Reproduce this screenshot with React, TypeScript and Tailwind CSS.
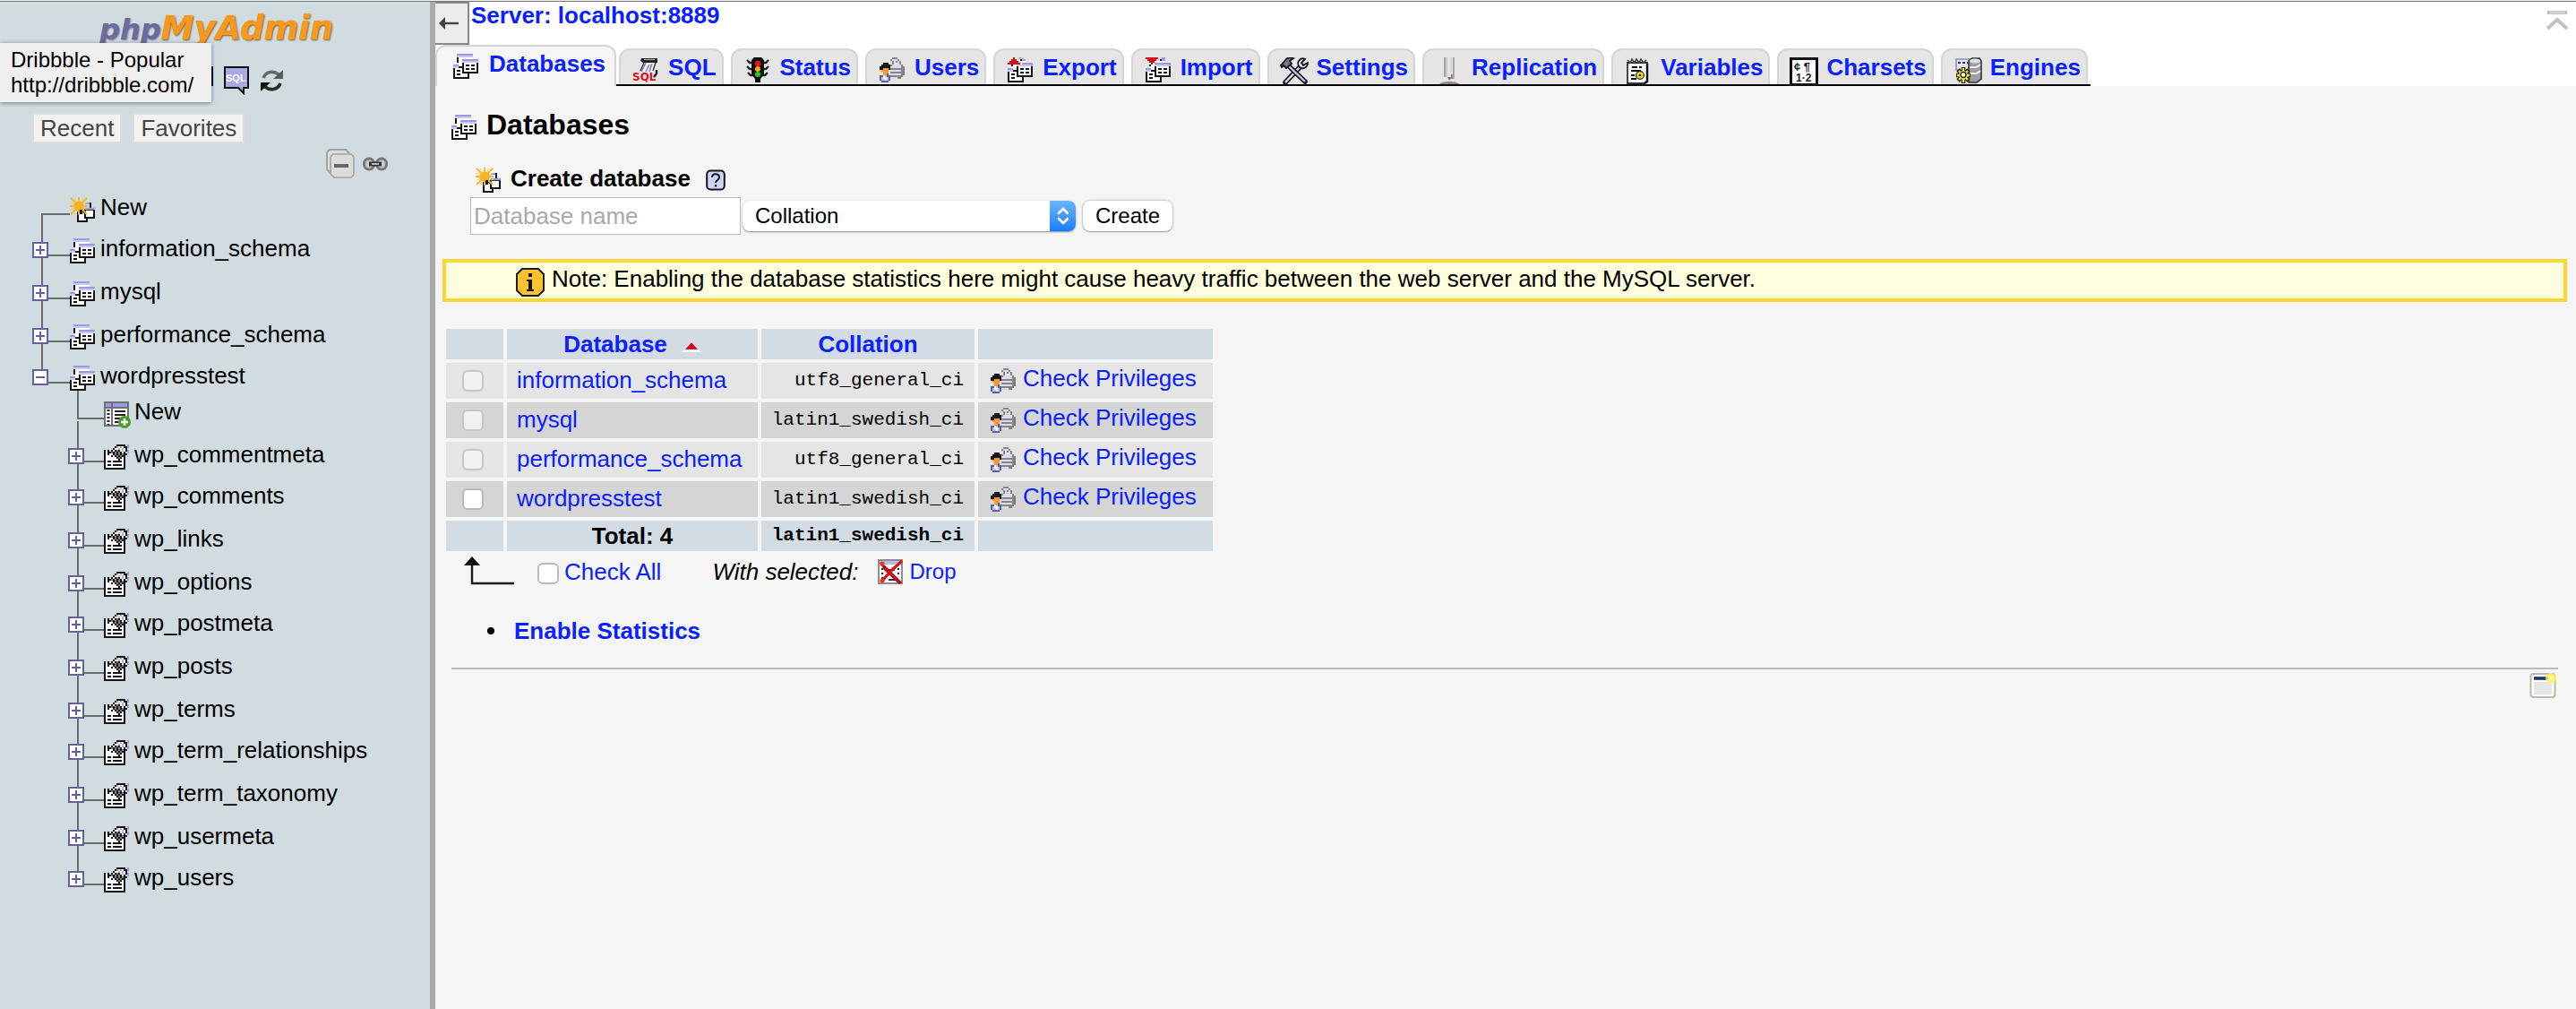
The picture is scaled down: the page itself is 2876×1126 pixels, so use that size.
import React from "react";

const PALETTE: Record<string, string> = {
  k: "#16161a",
  w: "#ffffff",
  v: "#9a9ae0",
  l: "#c9c9f4",
  g: "#7d7d7d",
  s: "#b4b4b8",
  r: "#d3101c",
  m: "#85858f",
  c: "#dcdce2",
  b: "#5661a4",
  p: "#bcc2e6",
  o: "#f39a3f",
  e: "#fbd0a0",
};

/* Draws a small bitmap icon from rows of palette letters. */
function Pixels({ rows, className = "size-7" }: { rows: string[]; className?: string }) {
  const cells: React.ReactNode[] = [];
  rows.forEach((row, y) => {
    let x = 0;
    while (x < row.length) {
      let end = x + 1;
      while (end < row.length && row[end] === row[x]) end++;
      if (row[x] !== ".") {
        cells.push(<rect key={`${x}-${y}`} x={x} y={y} width={end - x} height={1} fill={PALETTE[row[x]]} />);
      }
      x = end;
    }
  });
  return (
    <svg viewBox={`0 0 ${rows[0].length} ${rows.length}`} className={`${className} shrink-0`} aria-hidden="true">
      {cells}
    </svg>
  );
}

const DB_ROWS = [
  "..vvvvvvvvv...",
  "..lllllllll...",
  "..kwwwwwwww...",
  "..kwwvvvvvvvvv",
  "..kwwlllllllll",
  "..wwwkwwwwwwwk",
  "vvvwwkwkkwkkwk",
  "lllkkkwwwwwwwk",
  "kwwwwkwkkwkkwk",
  "kwkkwkwwwwwwwk",
  "kwwwwkkkkkkkkk",
  "kwkkwwwwk.....",
  "kwwwwwwwk.....",
  "kkkkkkkkk.....",
];

const PROPS_ROWS = [
  ".......kkkkk.v",
  "......kswswkkv",
  ".....kwwswswk.",
  "k.k.kwkgkwswkv",
  "kwkkgkgkgkwk.v",
  "kwkwwkgkgkgkk.",
  "kwwwkwkgkgkk..",
  "kwwwwwwkgkwk..",
  "kwwwwwwwkwwk..",
  "kwkkwkkkkkwk..",
  "kwwwwwwwwwwk..",
  "kwkkwkkkkkwk..",
  "kwwwwwwwwwwk..",
  "kkkkkkkkkkkk..",
];

const EXPORT_ROWS = [
  "...r..ssl.....",
  "..rrr..kvv....",
  ".rrrrr.www....",
  "rrrrrrr.vvvvvv",
  "..kwwllllllllv",
  "..wwwkwwwwwwwk",
  "vvvwwkwkkwkkwk",
  "lllkkkwwwwwwwk",
  "kwwwwkwkkwkkwk",
  "kwkkwkwwwwwwwk",
  "kwwwwkkkkkkkkk",
  "kwkkwwwwk.....",
  "kwwwwwwwk.....",
  "kkkkkkkkk.....",
];

const IMPORT_ROWS = [
  "rrrrrrr.lvv...",
  ".rrrrr..kvv...",
  "..rrr..www....",
  "...r.vvvvvvvvv",
  "..kwwllllllllv",
  "..wwwkwwwwwwwk",
  "vvvwwkwkkwkkwk",
  "lllkkkwwwwwwwk",
  "kwwwwkwkkwkkwk",
  "kwkkwkwwwwwwwk",
  "kwwwwkkkkkkkkk",
  "kwkkwwwwk.....",
  "kwwwwwwwk.....",
  "kkkkkkkkk.....",
];

const USERS_ROWS = [
  ".......mmm....",
  "......mcccm...",
  "......cm.mcm..",
  "..kkk.cm..cm..",
  ".kkkkkmcccccm.",
  "kkkkkkccccccmm",
  "kkoookmmmmmmmg",
  "eooooeccccccmg",
  ".eooo.mmmmmmmg",
  "..oobcccccccmg",
  "bbwpbbmmmmmmg.",
  "bpwwpbccccmg..",
  "bppwpb........",
  ".bbbb.........",
];

const DbIcon = () => <Pixels rows={DB_ROWS} />;
const PropsIcon = () => <Pixels rows={PROPS_ROWS} />;
const ExportIcon = () => <Pixels rows={EXPORT_ROWS} />;
const ImportIcon = () => <Pixels rows={IMPORT_ROWS} />;
const UsersIcon = () => <Pixels rows={USERS_ROWS} />;

function NewDbIcon() {
  return (
    <svg viewBox="0 0 28 28" className="size-7 shrink-0" aria-hidden="true">
      <path d="M19 7h4v6" fill="none" stroke="#16161a" strokeWidth="2" />
      <path d="M17 7h5" stroke="#9a9ae0" strokeWidth="2" />
      <rect x="9" y="17" width="10" height="10" fill="#fff" stroke="#16161a" strokeWidth="2" />
      <rect x="17" y="14" width="10" height="9" fill="#fff" stroke="#16161a" strokeWidth="2" />
      <path d="M17 13h11" stroke="#9a9ae0" strokeWidth="2.4" />
      <path d="M10 0v20M0 10h20M1 1l18 18M19 1L1 19" stroke="#e9b93a" strokeWidth="1.8" />
      <path d="M5 1l10 18M15 1L5 19M1 6l18 8M19 6L1 14" stroke="#f4cf63" strokeWidth="1.2" />
      <circle cx="10" cy="10" r="5.6" fill="#fbb21f" />
      <path d="M11 14h3v5h-3z" fill="#16161a" />
    </svg>
  );
}

function NewTableIcon() {
  return (
    <svg viewBox="0 0 30 30" className="h-[30px] w-[30px] shrink-0" aria-hidden="true">
      <rect x="1" y="1" width="26" height="26" fill="#fff" stroke="#6f6f74" strokeWidth="2" />
      <path d="M2 4h24" stroke="#9a9ae0" strokeWidth="4" />
      <path d="M2 7h24M9 2v25" stroke="#6f6f74" strokeWidth="2" />
      <path d="M5 9v17" stroke="#222" strokeWidth="3" strokeDasharray="2 2" />
      <path d="M12 11h12M12 15h12M12 19h8M12 23h6" stroke="#222" strokeWidth="2" />
      <circle cx="23" cy="23" r="7" fill="#4f9a2c" />
      <path d="M23 19v8M19 23h8" stroke="#fff" strokeWidth="2.4" />
    </svg>
  );
}

function SqlIcon() {
  return (
    <svg viewBox="0 0 30 28" className="h-7 w-[30px] shrink-0 overflow-visible" aria-hidden="true">
      <path d="M12 4l-4 12h14l4-12z" fill="#f2f2f8" />
      <path d="M10 1h18v5H12l-3-2z" fill="#222" />
      <path d="M13 2.5h12" stroke="#aaa" strokeWidth="1.2" />
      <path d="M15 6l-5 10M19 8l-4 8M22 7l-3 9" stroke="#7f7fc0" strokeWidth="1.6" />
      <path d="M13 6l-4 9M26 6l-3 9" stroke="#333" strokeWidth="1.4" />
      <path d="M27 14v4l-3 4" fill="none" stroke="#222" strokeWidth="2.4" />
      <text x="0" y="26" fontSize="12" fontWeight="700" fontFamily="DejaVu Sans, sans-serif" fill="#d8121f">
        SQL
      </text>
    </svg>
  );
}

function StatusIcon() {
  return (
    <svg viewBox="0 0 28 28" className="size-7 shrink-0" aria-hidden="true">
      <path d="M2 3l3 3h18l3-3M2 10l3 3h18l3-3M3 17l3 3h16l3-3" fill="none" stroke="#222" strokeWidth="2.4" />
      <path d="M10 0h8l3 3v16l-4 5v4h-6v-4l-4-5V3z" fill="#0d0d0d" />
      <circle cx="14" cy="7" r="3.2" fill="#ea1420" />
      <circle cx="14" cy="13" r="3" fill="#f7a51b" />
      <circle cx="14" cy="19" r="3" fill="#25c52c" />
    </svg>
  );
}

function SettingsIcon() {
  return (
    <svg viewBox="0 0 32 30" className="h-[30px] w-8 shrink-0" aria-hidden="true">
      <path d="M6 28L24 9" stroke="#15151c" strokeWidth="5.5" strokeLinecap="round" />
      <path d="M6 28L24 9" stroke="#dcdcf0" strokeWidth="2.4" />
      <path d="M8 8l20 19" stroke="#15151c" strokeWidth="5.5" strokeLinecap="round" />
      <path d="M9 9l19 18" stroke="#c5c5ea" strokeWidth="2.4" />
      <path d="M1 9l6-7c2-2 5-2 8-1l-4 3 2 3-6 5-3-3-2 2z" fill="#77777d" stroke="#15151c" strokeWidth="1.8" />
      <path d="M21 4c2-3 5-3 7-2l-4 4 2 3 5-3c0 5-5 8-9 5-2-2-2-5-1-7z" fill="#eeeef5" stroke="#15151c" strokeWidth="1.8" />
    </svg>
  );
}

function ReplicationIcon() {
  return (
    <svg viewBox="0 0 24 30" className="h-[30px] w-8 shrink-0" aria-hidden="true">
      <rect x="6" y="0" width="4" height="22" fill="#c9cac8" />
      <rect x="13" y="0" width="4" height="22" fill="#d9d9d7" />
      <path d="M7 0v22M17 0v24" stroke="#989996" strokeWidth="1.5" />
      <path d="M10 22l2 4 3-4z" fill="#777" />
      <path d="M1 30c2-4 20-4 22 0z" fill="#898a87" />
      <path d="M15 19v5" stroke="#a4574d" strokeWidth="1.4" />
    </svg>
  );
}

function VariablesIcon() {
  return (
    <svg viewBox="0 0 28 30" className="h-[30px] w-7 shrink-0" aria-hidden="true">
      <path d="M2 6h22v20l-3 3H2z" fill="#f8f8f8" stroke="#333" strokeWidth="1.8" />
      <path d="M24 7v20l-3 2" fill="none" stroke="#111" strokeWidth="2.4" />
      <path d="M2 3l3 3 2-4 3 4 2-4 3 4 2-4 3 4 3-3" fill="none" stroke="#444" strokeWidth="1.6" />
      <path d="M7 11h6M15 11h3M6 15h11M6 20h4M6 24h6" stroke="#111" strokeWidth="2" />
      <circle cx="16" cy="20" r="4.4" fill="#e9d92c" stroke="#222" strokeWidth="1.3" />
      <circle cx="16" cy="20" r="1.3" fill="#222" />
    </svg>
  );
}

function CharsetsIcon() {
  return (
    <svg viewBox="0 0 32 32" className="h-8 w-8 shrink-0" aria-hidden="true">
      <rect x="1.5" y="1.5" width="29" height="29" fill="#fff" stroke="#111" strokeWidth="3" />
      <text x="5" y="15" fontSize="13" fontWeight="700" fontFamily="Liberation Sans, sans-serif" fill="#222">
        ¢ ¶
      </text>
      <text x="7" y="27" fontSize="12" fontWeight="700" fontFamily="Liberation Sans, sans-serif" fill="#222">
        1·2
      </text>
    </svg>
  );
}

function EnginesIcon() {
  return (
    <svg viewBox="0 0 32 30" className="h-[30px] w-8 shrink-0" aria-hidden="true">
      <rect x="3" y="2" width="16" height="12" fill="#e6e6fa" stroke="#8c8cc8" strokeWidth="1.5" />
      <path d="M5 6h12" stroke="#333" strokeWidth="2" strokeDasharray="3 2" />
      <path d="M17 4l4-3h8l2 3v20l-5 4h-9z" fill="#9d9da2" stroke="#333" strokeWidth="1.6" />
      <ellipse cx="24" cy="4" rx="6" ry="2.5" fill="#dededf" />
      <path d="M18 11h8l4-3M18 18h8l4-3" fill="none" stroke="#ededee" strokeWidth="2" />
      <path d="M11 11v18M3 20h16M5 14l12 12M17 14L5 26" stroke="#1d1d1d" strokeWidth="4.6" />
      <path d="M11 12v16M4 20h14M6 15l10 10M16 15L6 25" stroke="#f3e32a" strokeWidth="2.4" />
      <circle cx="11" cy="20" r="5" fill="#f3e32a" />
      <circle cx="11" cy="19.5" r="3" fill="#fff" stroke="#222" strokeWidth="1.4" />
    </svg>
  );
}

function DropIcon() {
  return (
    <svg viewBox="0 0 28 28" className="size-7 shrink-0" aria-hidden="true">
      <rect x="1" y="1" width="26" height="26" fill="#f7f7f7" stroke="#8d8d8d" strokeWidth="2" />
      <path d="M2 4h24" stroke="#b9b9e6" strokeWidth="4" />
      <path d="M5 10v15M23 10v10" stroke="#222" strokeWidth="2" strokeDasharray="2 3" />
      <path d="M10 12h9M12 23h9" stroke="#333" strokeWidth="2" />
      <path d="M3 4l6 5 17 17-2 1L8 12z" fill="#e01a1f" stroke="#a80d12" strokeWidth="1.6" />
      <path d="M27 2L16 12 5 24" fill="none" stroke="#cf1519" strokeWidth="3.2" />
      <circle cx="5" cy="24" r="2.6" fill="#e23a22" />
      <circle cx="5" cy="5" r="2.6" fill="#e23a22" />
    </svg>
  );
}

const TABS: { label: string; icon: React.ReactNode }[] = [
  { label: "SQL", icon: <SqlIcon /> },
  { label: "Status", icon: <StatusIcon /> },
  { label: "Users", icon: <UsersIcon /> },
  { label: "Export", icon: <ExportIcon /> },
  { label: "Import", icon: <ImportIcon /> },
  { label: "Settings", icon: <SettingsIcon /> },
  { label: "Replication", icon: <ReplicationIcon /> },
  { label: "Variables", icon: <VariablesIcon /> },
  { label: "Charsets", icon: <CharsetsIcon /> },
  { label: "Engines", icon: <EnginesIcon /> },
];

const DATABASES = [
  { name: "information_schema", collation: "utf8_general_ci", system: true },
  { name: "mysql", collation: "latin1_swedish_ci", system: true },
  { name: "performance_schema", collation: "utf8_general_ci", system: true },
  { name: "wordpresstest", collation: "latin1_swedish_ci", system: false },
];

const WP_TABLES = [
  "wp_commentmeta",
  "wp_comments",
  "wp_links",
  "wp_options",
  "wp_postmeta",
  "wp_posts",
  "wp_terms",
  "wp_term_relationships",
  "wp_term_taxonomy",
  "wp_usermeta",
  "wp_users",
];

function Expander({ open = false, label }: { open?: boolean; label: string }) {
  return (
    <button
      type="button"
      aria-label={`${open ? "Collapse" : "Expand"} ${label}`}
      className="relative mt-[17px] size-[18px] shrink-0 border-2 border-[#62629c] bg-white"
    >
      <svg viewBox="0 0 14 14" className="size-full" aria-hidden="true">
        <path d={open ? "M2 7h10" : "M2 7h10M7 2v10"} stroke="#62629c" strokeWidth="2" />
      </svg>
    </button>
  );
}

function TreeRow({
  label,
  icon,
  expander,
  nested = false,
}: {
  label: string;
  icon: React.ReactNode;
  expander?: "open" | "closed";
  nested?: boolean;
}) {
  return (
    <div className={nested ? "flex items-start pl-[76px]" : "flex items-start pl-9"}>
      {expander ? (
        <Expander open={expander === "open"} label={label} />
      ) : (
        <span className="mt-[31px] ml-2.5 h-0.5 w-2 shrink-0 bg-[#6b6b6b]" />
      )}
      <span className={nested ? "mt-[31px] h-0.5 w-[22px] shrink-0 bg-[#6b6b6b]" : "mt-[31px] h-0.5 w-6 shrink-0 bg-[#6b6b6b]"} />
      <span className="relative mt-[13px] w-7 shrink-0">{icon}</span>
      <a href="#" className="mt-[9px] ml-1.5 leading-[30px] text-black">
        {label}
      </a>
    </div>
  );
}

function Sidebar() {
  return (
    <aside className="w-[486px] shrink-0 border-r-[6px] border-[#aaaaaa] bg-[#d0dce0]">
      <div className="relative">
        <a
          href="#"
          aria-label="phpMyAdmin"
          className="block h-[46px] pt-2 pl-[111px] font-['DejaVu_Sans',sans-serif] text-[37px] leading-[44px] font-bold text-[#f8981d] italic [text-shadow:1px_1px_2px_#7a5a30]"
        >
          <span className="text-[32px] text-[#6c6c9c] [text-shadow:1px_1px_2px_#77779a]">php</span>MyAdmin
        </a>
        <div role="tooltip" className="absolute top-[46px] left-0 z-10 w-[236px] bg-[#efefef] py-[5px] pl-3 text-2xl leading-7 text-black shadow-[0_1px_5px_rgba(0,0,0,0.45)]">
          Dribbble - Popular
          <br />
          http://dribbble.com/
        </div>
      </div>
      <div className="mt-6 flex items-start pl-[210px]">
        <button type="button" aria-label="Documentation" className="mt-0.5 h-[22px] w-7 border-2 border-[#16161a] bg-white" />
        <button type="button" aria-label="Query window" className="mt-0.5 ml-3">
          <svg viewBox="0 0 28 32" className="h-8 w-7" aria-hidden="true">
            <path d="M1 1h26v23h-5v6l-6-6H1z" fill="#a9a9e4" stroke="#111" strokeWidth="2" />
            <text x="2" y="17" fontSize="11" fontWeight="700" fontFamily="Liberation Sans, sans-serif" fill="#fff">
              SQL
            </text>
          </svg>
        </button>
        <button type="button" aria-label="Reload navigation" className="mt-1.5 ml-[13px]">
          <svg viewBox="0 0 25 24" className="h-6 w-[25px]" aria-hidden="true">
            <path d="M3 9c3-8 12-8 17-4" fill="none" stroke="#6a6a6a" strokeWidth="3.6" />
            <path d="M25 0v10H14z" fill="#5a5a5a" />
            <path d="M22 15c-3 8-12 8-17 4" fill="none" stroke="#2a2a2a" strokeWidth="3.6" />
            <path d="M0 24V14h11z" fill="#111" />
          </svg>
        </button>
      </div>
      <div className="mt-5 flex gap-3 pl-9 text-[#444444]">
        <button type="button" className="border-2 border-[#dddddd] bg-[#f2f2f2] px-[7px] leading-[30px]">
          Recent
        </button>
        <button type="button" className="border-2 border-[#dddddd] bg-[#f2f2f2] px-[7px] leading-[30px]">
          Favorites
        </button>
      </div>
      <div className="mt-1.5 flex items-center gap-2 pl-[363px]">
        <button type="button" aria-label="Collapse all">
          <svg viewBox="0 0 34 34" className="size-[34px]" aria-hidden="true">
            <path d="M6 27l-4-4V4l3-3h18l4 4" fill="#dcdcdc" stroke="#a2a2a2" strokeWidth="2" />
            <path d="M9 6h20l3 3v20l-3 3H10l-4-4V9z" fill="#dcdcdc" stroke="#a2a2a2" strokeWidth="1.6" />
            <path d="M10 19h16" stroke="#666" strokeWidth="4" />
          </svg>
        </button>
        <button type="button" aria-label="Link with main panel">
          <svg viewBox="0 0 28 16" className="h-4 w-7" aria-hidden="true">
            <rect x="1.5" y="2" width="11" height="12" rx="5.5" fill="#c4c8ca" stroke="#777" strokeWidth="3" />
            <rect x="15.5" y="2" width="11" height="12" rx="5.5" fill="#c4c8ca" stroke="#777" strokeWidth="3" />
            <path d="M7 8h14" stroke="#333" strokeWidth="5" />
            <path d="M10 8h8" stroke="#bbb" strokeWidth="2" />
          </svg>
        </button>
      </div>
      <ul className="mt-[7px] whitespace-nowrap">
        <li className="relative h-[46px]">
          <span className="absolute top-8 left-[46px] h-full w-0.5 bg-[#6b6b6b]" />
          <TreeRow label="New" icon={<NewDbIcon />} />
        </li>
        {DATABASES.slice(0, 3).map((db) => (
          <li key={db.name} className="relative h-12 nth-[3n+1]:h-[46px]">
            <span className="absolute top-8 left-[46px] h-full w-0.5 bg-[#6b6b6b]" />
            <TreeRow label={db.name} icon={<DbIcon />} expander="closed" />
          </li>
        ))}
        <li>
          <div className="relative h-10">
            <span className="absolute top-8 left-[86px] h-full w-0.5 bg-[#6b6b6b]" />
            <TreeRow label="wordpresstest" icon={<DbIcon />} expander="open" />
          </div>
          <ul>
            <li className="relative h-12">
              <span className="absolute top-[35px] left-[86px] h-full w-0.5 bg-[#6b6b6b]" />
              <TreeRow label="New" icon={<NewTableIcon />} nested />
            </li>
            {WP_TABLES.map((table, i) => (
              <li key={table} className="relative h-12 nth-[3n+2]:h-[46px]">
                {i < WP_TABLES.length - 1 && <span className="absolute top-8 left-[86px] h-full w-0.5 bg-[#6b6b6b]" />}
                <TreeRow label={table} icon={<PropsIcon />} expander="closed" nested />
              </li>
            ))}
          </ul>
        </li>
      </ul>
    </aside>
  );
}

function TopBar() {
  return (
    <header className="bg-white">
      <div className="flex h-12 items-start">
        <button type="button" aria-label="Hide navigation panel" className="flex h-12 w-[38px] items-center justify-start border-2 border-l-0 border-[#888888] bg-[#ececec] pl-1">
          <svg viewBox="0 0 22 14" className="h-3.5 w-[22px]" aria-hidden="true">
            <path d="M4 7h18" stroke="#444" strokeWidth="2.4" />
            <path d="M0 7l7-7v14z" fill="#444" />
          </svg>
        </button>
        <a href="#" className="ml-0.5 leading-[30px] font-bold text-[#0a20ff]">
          Server: localhost:8889
        </a>
        <a href="#" aria-label="Scroll to top" className="mt-2.5 mr-[9px] ml-auto">
          <svg viewBox="0 0 24 22" className="h-[22px] w-6" aria-hidden="true">
            <path d="M1 2h22" stroke="#b5b5b5" strokeWidth="3.5" />
            <path d="M3 2h18" stroke="#ddd" strokeWidth="1.5" />
            <path d="M1 20l11-10 11 10" fill="none" stroke="#c2c2c2" strokeWidth="4" />
          </svg>
        </a>
      </div>
      <nav className="flex items-end font-bold">
        <a href="#" aria-current="page" className="flex h-[46px] items-start rounded-t-xl border-2 border-b-0 border-[#d5d5d5] bg-[#f5f5f5] pt-1 pr-2.5 pl-[18px] text-[#0a20ff]">
          <span className="mt-1">
            <DbIcon />
          </span>
          <span className="ml-3 leading-[30px]">Databases</span>
        </a>
        <div className="flex gap-2 border-b-2 border-black px-[3px]">
          {TABS.map((tab) => (
            <a key={tab.label} href="#" className="flex h-10 items-start rounded-t-xl border-2 border-b-0 border-[#d5d5d5] bg-[#e5e5e5] pt-1 pr-1.5 pl-3 text-[#0a20ff]">
              <span className="mt-1 flex w-8 shrink-0 justify-center">{tab.icon}</span>
              <span className="ml-[9px] leading-[30px]">{tab.label}</span>
            </a>
          ))}
        </div>
      </nav>
    </header>
  );
}

function CreateForm() {
  return (
    <form className="mt-[27px] pl-[31px]" onSubmit={(e) => e.preventDefault()}>
      <div className="flex items-start pl-1.5">
        <span className="mt-[3px]">
          <NewDbIcon />
        </span>
        <label htmlFor="new-db" className="ml-[11px] leading-[30px] font-bold">
          Create database
        </label>
        <a href="#" aria-label="Documentation" className="mt-[5px] ml-[17px]">
          <svg viewBox="0 0 22 24" className="h-6 w-[22px]" aria-hidden="true">
            <rect x="1.2" y="1.5" width="19.6" height="21" rx="4" fill="#d3d3f6" stroke="#15151c" strokeWidth="2" />
            <path d="M7 9c0-5 8-5 8 0 0 3-4 3-4 6" fill="none" stroke="#15151c" strokeWidth="2" />
            <path d="M9.8 17h2.4v2.4H9.8z" fill="#15151c" />
          </svg>
        </a>
      </div>
      <div className="mt-[5px] flex items-center">
        <input
          id="new-db"
          type="text"
          placeholder="Database name"
          className="h-[42px] w-[302px] border border-[#bdbdbd] bg-white px-[3px] placeholder:text-[#a9a9a9]"
        />
        <span className="relative ml-0.5 w-[372px]">
          <select
            aria-label="Collation"
            className="block h-[34px] w-full appearance-none rounded-lg bg-white pl-3.5 text-2xl leading-[30px] shadow-[0_1px_2px_rgba(0,0,0,0.45)]"
          >
            <option>Collation</option>
          </select>
          <span className="pointer-events-none absolute top-0 right-0 flex h-full w-[29px] items-center justify-center rounded-r-lg bg-linear-to-b from-[#6cb3fa] to-[#127dfc]">
            <svg viewBox="0 0 14 20" className="h-5 w-3.5" aria-hidden="true">
              <path d="M2 7l5-5 5 5M2 13l5 5 5-5" fill="none" stroke="#fff" strokeWidth="2.6" strokeLinecap="round" strokeLinejoin="round" />
            </svg>
          </span>
        </span>
        <button type="submit" className="ml-2 h-[34px] w-[100px] rounded-lg bg-white text-2xl leading-[30px] shadow-[0_0_2px_1px_rgba(0,0,0,0.2),0_1px_1px_rgba(0,0,0,0.2)]">
          Create
        </button>
      </div>
    </form>
  );
}

const checkboxClass =
  "block size-6 shrink-0 appearance-none rounded-md border-2 border-[#b9b9b9] bg-white disabled:border-[#c6c6c6] disabled:bg-[#f0f0f0]";

function DatabaseTable() {
  return (
    <table className="mt-[26px] border-separate border-spacing-1 leading-[30px]">
      <thead>
        <tr className="h-[34px] bg-[#d3dce3] text-[#0a20ff]">
          <th className="w-16 p-0" />
          <th scope="col" className="w-[280px] p-0">
            <a href="#" className="flex items-center justify-center">
              Database
              <svg viewBox="0 0 22 12" className="mt-1.5 ml-4 h-3 w-[22px]" aria-hidden="true">
                <path d="M11 0l11 12H0z" fill="#fff" />
                <path d="M11 1l7 8H4z" fill="#c8101a" />
              </svg>
            </a>
          </th>
          <th scope="col" className="w-[238px] p-0">
            <a href="#" className="block">
              Collation
            </a>
          </th>
          <th className="w-[262px] p-0" />
        </tr>
      </thead>
      <tbody>
        {DATABASES.map((db) => (
          <tr key={db.name} className="h-10 odd:bg-[#e5e5e5] even:bg-[#d5d5d5]">
            <td className="p-0 pl-[18px]">
              <input type="checkbox" aria-label={`Select ${db.name}`} disabled={db.system} className={checkboxClass} />
            </td>
            <td className="p-0 pb-0.5 pl-[11px]">
              <a href="#" className="block text-[#0a20ff]">
                {db.name}
              </a>
            </td>
            <td className="p-0 pr-3 text-right font-['Liberation_Mono',monospace] text-[21px]">{db.collation}</td>
            <td className="p-0 pt-0.5 pl-3.5 align-top">
              <a href="#" className="flex items-start text-[#0a20ff]">
                <span className="mt-1">
                  <UsersIcon />
                </span>
                <span className="ml-2">Check Privileges</span>
              </a>
            </td>
          </tr>
        ))}
      </tbody>
      <tfoot>
        <tr className="h-[34px] bg-[#d3dce3]">
          <th className="p-0" />
          <th className="p-0">Total: 4</th>
          <th className="p-0 pr-3 text-right font-['Liberation_Mono',monospace] text-[21px]">latin1_swedish_ci</th>
          <th className="p-0" />
        </tr>
      </tfoot>
    </table>
  );
}

export default function App() {
  return (
    <div className="flex min-h-screen flex-col bg-[#f5f5f5] font-['Liberation_Sans',Arial,sans-serif] text-[26px] text-black">
      <div className="h-0.5 border-b border-[#777777] bg-[#f0f0f0]" />
      <div className="flex flex-1">
        <Sidebar />
        <div className="min-w-0 flex-1">
          <TopBar />
          <main className="pt-[25px] pr-2.5 pl-2">
            <h2 className="flex items-start pl-2.5 text-[32px] leading-9 font-bold">
              <span className="mt-[7px]">
                <DbIcon />
              </span>
              <span className="ml-[11px]">Databases</span>
            </h2>
            <CreateForm />
            <div role="note" className="mt-[27px] flex h-12 items-start border-4 border-[#ffd732] bg-[#ffffdd] pt-[3px] pl-[78px] leading-[30px]">
              <svg viewBox="0 0 32 32" className="mt-[3px] size-8 shrink-0" aria-hidden="true">
                <path d="M7 1h18l6 6v18l-6 6H7l-6-6V7z" fill="#fdc02f" stroke="#1c1c1c" strokeWidth="2" />
                <path d="M14 6h4v4h-4zM12 13h6v11h2v2h-8v-2h2v-9h-2z" fill="#111" />
              </svg>
              <p className="ml-2">
                Note: Enabling the database statistics here might cause heavy traffic between the web server and the MySQL server.
              </p>
            </div>
            <DatabaseTable />
            <div className="flex h-[38px] items-center pl-6">
              <svg viewBox="0 0 56 34" className="h-[34px] w-14" aria-hidden="true">
                <path d="M9 8v22h47" fill="none" stroke="#1c1c1c" strokeWidth="2.4" />
                <path d="M9 0l9 10H0z" fill="#0d0d0d" />
              </svg>
              <input id="check-all" type="checkbox" className={`${checkboxClass} mt-1 ml-[26px]`} />
              <label htmlFor="check-all" className="ml-1.5 leading-[30px] text-[#0a20ff]">
                Check All
              </label>
              <em className="ml-[57px] leading-[30px]">With selected:</em>
              <button type="button" className="ml-[22px] flex items-center text-2xl leading-[30px] text-[#0a20ff]">
                <DropIcon />
                <span className="ml-[7px]">Drop</span>
              </button>
            </div>
            <ul className="mt-8 pl-[50px] leading-[30px] font-bold">
              <li className="flex items-center gap-[22px]">
                <span className="size-2 rounded-full bg-black" />
                <a href="#" className="text-[#0a20ff]">
                  Enable Statistics
                </a>
              </li>
            </ul>
            <hr className="mx-2.5 mt-[26px] border-t-2 border-[#bbbbbb]" />
            <div className="mt-[3px] mr-3 flex justify-end">
              <button type="button" aria-label="Open new window">
                <svg viewBox="0 0 30 30" className="size-[30px]" aria-hidden="true">
                  <rect x="1.5" y="2" width="27" height="26" rx="3" fill="#fff" stroke="#b9b9ae" strokeWidth="2" />
                  <path d="M5 11h20v14H5z" fill="#e6e6e6" />
                  <path d="M5 7h16" stroke="#0c3a80" strokeWidth="3.6" />
                  <ellipse cx="24" cy="6.5" rx="6" ry="5.5" fill="#fff04a" opacity="0.85" />
                  <circle cx="24" cy="6.5" r="2" fill="#fffde0" />
                </svg>
              </button>
            </div>
          </main>
        </div>
      </div>
    </div>
  );
}
